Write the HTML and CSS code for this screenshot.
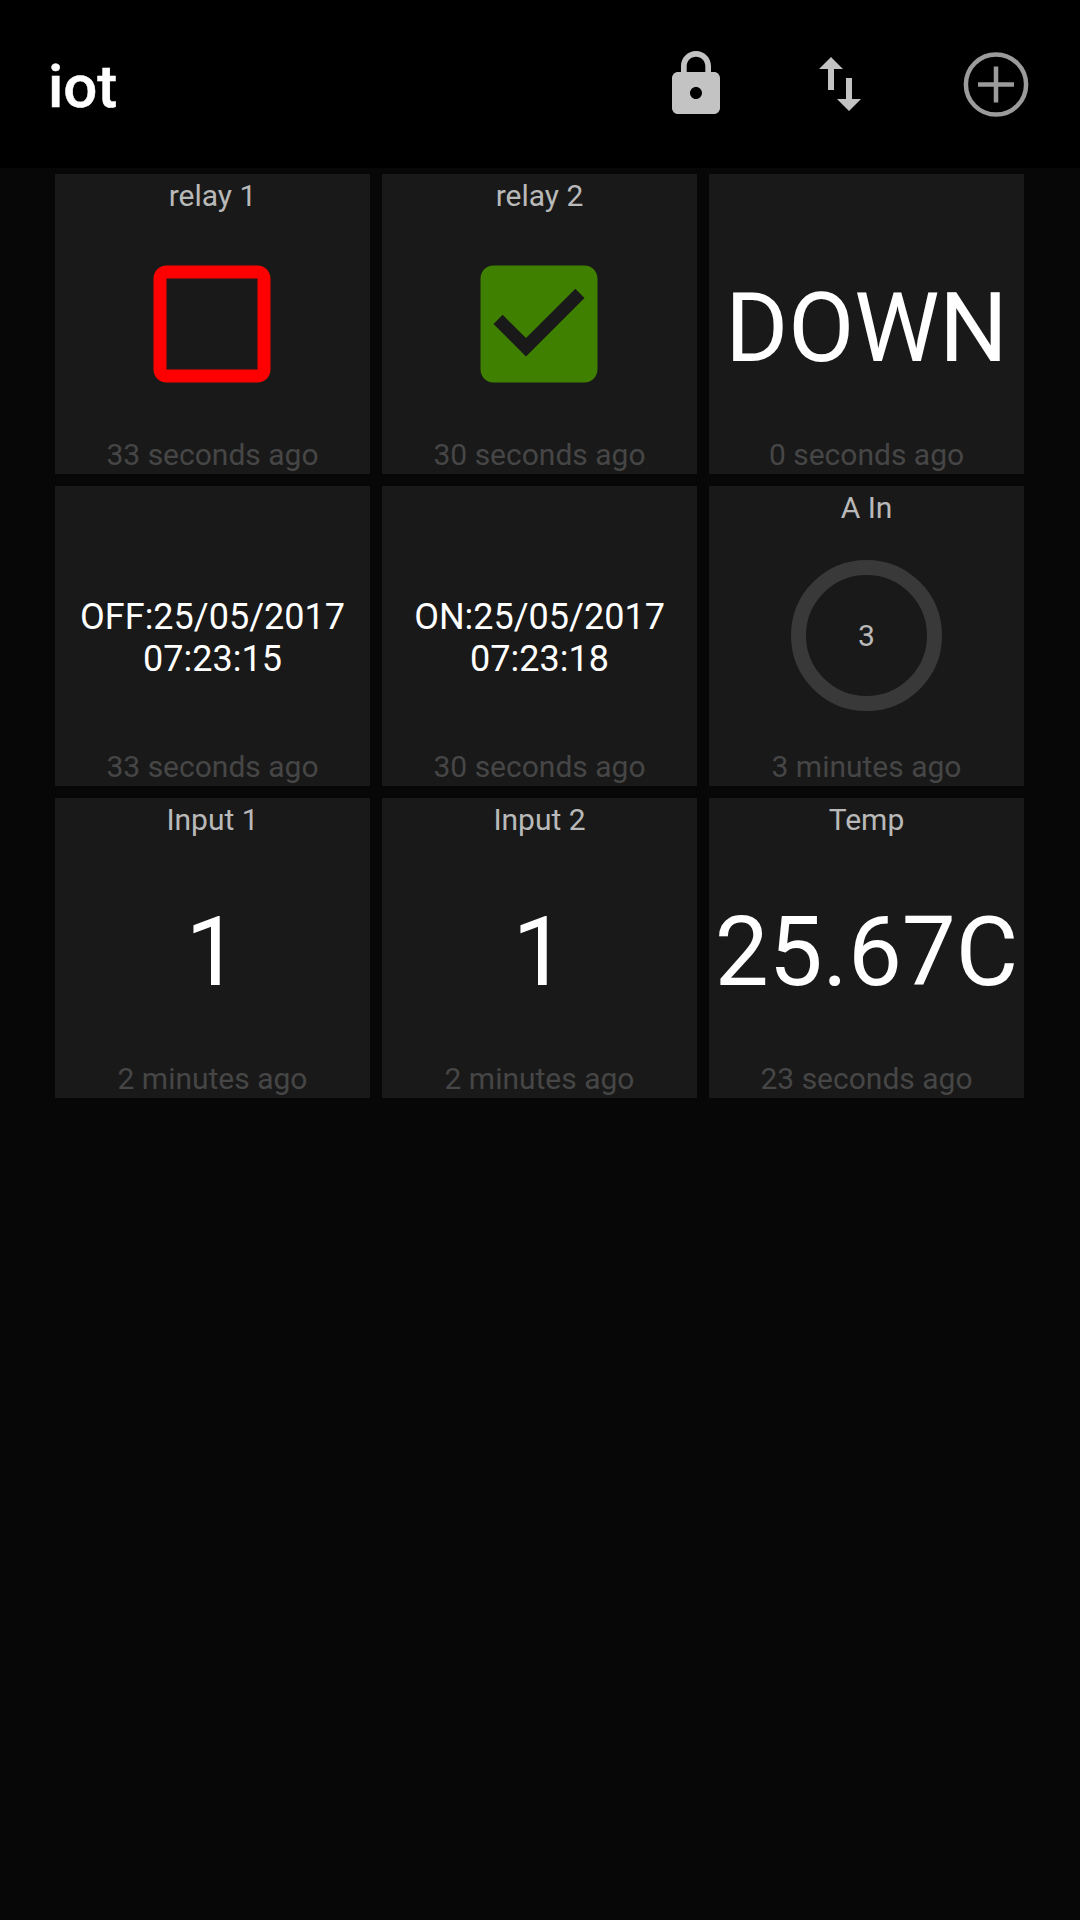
FILE: index.html
```html
<!DOCTYPE html>
<html lang="en">
<head>
<meta charset="utf-8">
<title>iot</title>
<link rel="stylesheet" href="styles.css">
</head>
<body>
<header class="toolbar">
  <h1 class="title">iot</h1>
  <nav class="actions">
    <svg class="icon" viewBox="0 0 24 24"><path d="M18 8h-1V6c0-2.76-2.24-5-5-5S7 3.24 7 6v2H6c-1.1 0-2 .9-2 2v10c0 1.1.9 2 2 2h12c1.1 0 2-.9 2-2V10c0-1.1-.9-2-2-2zm-6 9c-1.1 0-2-.9-2-2s.9-2 2-2 2 .9 2 2-.9 2-2 2zm3.1-9H8.900V6c0-1.710 1.390-3.100 3.100-3.100 1.710 0 3.100 1.390 3.100 3.100v2z"/></svg>
    <svg class="icon" viewBox="0 0 24 24"><path d="M16 17.010V10h-2v7.010h-3L15 21l4-3.990h-3zM9 3L5 6.990h3V14h2V6.990h3L9 3z"/></svg>
    <svg class="icon icon-add" viewBox="0 0 72 72"><circle cx="36" cy="36.500" r="30.100"/><path d="M18 36.500h36M36 18.500v36"/></svg>
  </nav>
</header>
<main class="board">
  <section class="tile">
    <h2 class="label">relay 1</h2>
    <div class="value"><svg class="check off" viewBox="0 0 24 24"><path d="M19 5v14H5V5h14m0-2H5c-1.100 0-2 .9-2 2v14c0 1.100.9 2 2 2h14c1.100 0 2-.9 2-2V5c0-1.100-.9-2-2-2z"/></svg></div>
    <p class="age">33 seconds ago</p>
  </section>
  <section class="tile">
    <h2 class="label">relay 2</h2>
    <div class="value"><svg class="check on" viewBox="0 0 24 24"><path d="M19 3H5c-1.110 0-2 .9-2 2v14c0 1.100.890 2 2 2h14c1.110 0 2-.9 2-2V5c0-1.100-.890-2-2-2zm-9 14l-5-5 1.410-1.410L10 14.170l7.590-7.590L19 8l-9 9z"/></svg></div>
    <p class="age">30 seconds ago</p>
  </section>
  <section class="tile">
    <h2 class="label"></h2>
    <div class="value large">DOWN</div>
    <p class="age">0 seconds ago</p>
  </section>
  <section class="tile">
    <h2 class="label"></h2>
    <div class="value small">OFF:25/05/2017<br>07:23:15</div>
    <p class="age">33 seconds ago</p>
  </section>
  <section class="tile">
    <h2 class="label"></h2>
    <div class="value small">ON:25/05/2017<br>07:23:18</div>
    <p class="age">30 seconds ago</p>
  </section>
  <section class="tile">
    <h2 class="label">A In</h2>
    <div class="value"><div class="gauge">3</div></div>
    <p class="age">3 minutes ago</p>
  </section>
  <section class="tile">
    <h2 class="label">Input 1</h2>
    <div class="value large">1</div>
    <p class="age">2 minutes ago</p>
  </section>
  <section class="tile">
    <h2 class="label">Input 2</h2>
    <div class="value large">1</div>
    <p class="age">2 minutes ago</p>
  </section>
  <section class="tile">
    <h2 class="label">Temp</h2>
    <div class="value large">25.67C</div>
    <p class="age">23 seconds ago</p>
  </section>
</main>
</body>
</html>
```
FILE: styles.css
```css
* { box-sizing: border-box; margin: 0; padding: 0; }

body {
  min-height: 1920px;
  background: #070707;
  color: #fff;
  font-family: Roboto, "Noto Sans", sans-serif;
}

.toolbar {
  display: flex;
  align-items: center;
  justify-content: space-between;
  height: 168px;
  padding: 0 48px;
  background: #000;
}

.title {
  padding-top: 5px;
  font-size: 60px;
  font-weight: 500;
  line-height: 70px;
  -webkit-text-stroke: 0.5px #fff;
}

.actions {
  display: flex;
  gap: 72px;
}

.icon {
  display: block;
  width: 72px;
  height: 72px;
  fill: #c3c3c3;
}

.icon-add {
  margin: 0 0 0 12px;
  fill: none;
  stroke: #9b9b9b;
  stroke-width: 4.5;
}

.board {
  display: grid;
  grid-template-columns: repeat(3, 315px);
  grid-auto-rows: 300px;
  gap: 12px;
  padding: 6px 55px;
}

.tile {
  display: grid;
  grid-template-rows: 40px 220px 40px;
  background: #191919;
  text-align: center;
}

.label,
.age {
  font-size: 30px;
  font-weight: 400;
  line-height: 36px;
}

.label { padding-top: 4px; color: #b9b9b9; }
.age { padding-top: 3px; color: #464646; }

.value {
  display: flex;
  align-items: center;
  justify-content: center;
  white-space: nowrap;
}

.large { padding-top: 8px; font-size: 96px; line-height: 112px; }
.small { padding-top: 3px; font-size: 36px; line-height: 42px; }

.check { width: 156px; height: 156px; margin-right: 1px; }
.off { fill: #f00; }
.on { fill: #408000; }

.gauge {
  width: 151px;
  height: 151px;
  margin-bottom: 1px;
  padding-top: 1px;
  border: 15px solid #393939;
  border-radius: 50%;
  color: #b9b9b9;
  font-size: 30px;
  line-height: 120px;
}
```
